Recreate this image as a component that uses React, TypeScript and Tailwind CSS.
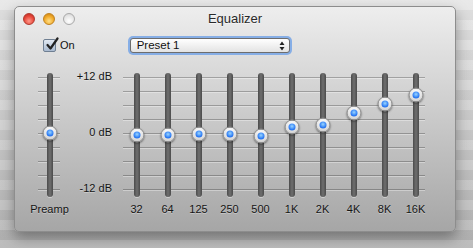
const bands = [
  { label: '32', y: 62 },
  { label: '64', y: 62 },
  { label: '125', y: 61 },
  { label: '250', y: 61 },
  { label: '500', y: 63 },
  { label: '1K', y: 54 },
  { label: '2K', y: 52 },
  { label: '4K', y: 40 },
  { label: '8K', y: 31 },
  { label: '16K', y: 22 },
]

const ticks = [0, 1, 2, 3, 4, 5, 6, 7, 8]

function Ticks({ className }: { className: string }) {
  return (
    <div className={`absolute top-[4px] flex flex-col gap-[13px] ${className}`}>
      {ticks.map((t) => (
        <div key={t} className="h-px bg-black/25 shadow-[0_1px_0_rgba(255,255,255,0.35)]" />
      ))}
    </div>
  )
}

function Slider({ y, label }: { y: number; label: string }) {
  return (
    <div className="w-[31px] flex flex-col items-center">
      <div className="relative w-full h-[124px] flex justify-center">
        <div className="w-[6px] h-full rounded-full bg-[linear-gradient(to_right,#4b4b4b,#6f6f6f_50%,#4b4b4b)] shadow-[0_1px_0_rgba(255,255,255,0.4)]" />
        <div
          className="absolute left-1/2 -translate-x-1/2 -translate-y-1/2 w-[15px] h-[15px] rounded-full border border-[#8a8a8a] bg-[radial-gradient(circle_at_50%_30%,#ffffff,#e4e4e4_55%,#b9b9b9)] shadow-[0_1px_2px_rgba(0,0,0,0.45)] flex items-center justify-center"
          style={{ top: y }}
        >
          <div className="w-[7px] h-[7px] rounded-full bg-[radial-gradient(circle_at_50%_40%,#9ad6ff,#2d7cf5_60%,#1b55c4)]" />
        </div>
      </div>
      <div className="mt-[6px] text-[11px] leading-[13px] text-[#151515] [text-shadow:0_1px_0_rgba(255,255,255,0.35)]">
        {label}
      </div>
    </div>
  )
}

export default function App() {
  return (
    <main
      className="w-[473px] h-[248px] overflow-hidden pl-[14px] pt-[6px] bg-[repeating-linear-gradient(to_bottom,rgba(255,255,255,0.12)_0px,rgba(255,255,255,0.12)_10px,rgba(0,0,0,0.03)_10px,rgba(0,0,0,0.03)_20px),linear-gradient(to_bottom,#e6e6e6,#b3b3b3)]"
      style={{ fontFamily: '"Liberation Sans", Arial, sans-serif' }}
    >
      <div className="w-[442px] h-[226px] rounded-[5px] border border-[#8d8d8d] bg-gradient-to-b from-[#eeeeee] to-[#a6a6a6] shadow-[0_6px_14px_rgba(0,0,0,0.35)] flex flex-col">
        <div className="h-[24px] grid grid-cols-[1fr_auto_1fr] items-center">
          <div className="flex items-center gap-[8px] pl-[8px]">
            <span className="w-[12px] h-[12px] rounded-full border border-[#b0392f] bg-[radial-gradient(circle_at_50%_70%,#ff9a8c,#e8483b_55%,#b52a20)]" />
            <span className="w-[12px] h-[12px] rounded-full border border-[#c0821f] bg-[radial-gradient(circle_at_50%_70%,#ffe08a,#f0a929_55%,#c57d12)]" />
            <span className="w-[12px] h-[12px] rounded-full border border-[#a9a9a9] bg-[radial-gradient(circle_at_50%_70%,#ffffff,#e6e6e6_60%,#cfcfcf)]" />
          </div>
          <div className="text-[13px] text-[#2a2a2a] [text-shadow:0_1px_0_rgba(255,255,255,0.6)]">Equalizer</div>
          <div />
        </div>

        <div className="mt-[5px] h-[19px] flex items-center">
          <label className="ml-[28px] flex items-center gap-[4px] text-[11px] text-[#111]">
            <span className="relative w-[13px] h-[13px] rounded-[2px] border border-[#6f7f92] bg-gradient-to-b from-[#e2e9f2] to-[#a9bad0]">
              <svg className="absolute -top-[3px] left-[1px]" width="14" height="14" viewBox="0 0 14 14">
                <path d="M2.5 8 L5.5 11.5 L12.5 1.5" fill="none" stroke="#222" strokeWidth="2.2" strokeLinecap="round" strokeLinejoin="round" />
              </svg>
            </span>
            On
          </label>
          <div className="ml-[53px] w-[164px] h-[19px] rounded-[5px] bg-[#86aee6] p-[2px]">
            <div className="w-full h-full rounded-[3px] border border-[#6d6d6d] bg-gradient-to-b from-[#ffffff] to-[#e3e3e3] flex items-center pl-[6px] pr-[4px]">
              <span className="grow text-[11.5px] text-[#111]">Preset 1</span>
              <svg width="6" height="10" viewBox="0 0 6 10">
                <path d="M3 0.5 L5.5 4 L0.5 4 Z M3 9.5 L5.5 6 L0.5 6 Z" fill="#222" />
              </svg>
            </div>
          </div>
        </div>

        <div className="mt-[18px] flex items-start pl-[19px]">
          <div className="relative">
            <Ticks className="left-[4px] w-[22px]" />
            <Slider y={60} label="Preamp" />
          </div>
          <div className="w-[47px] h-[125px] -mt-[3px] flex flex-col justify-between items-end text-[11px] leading-[13px] text-[#151515] [text-shadow:0_1px_0_rgba(255,255,255,0.35)]">
            <span>+12 dB</span>
            <span>0 dB</span>
            <span>-12 dB</span>
          </div>
          <div className="relative ml-[9px] flex">
            <Ticks className="left-[2px] right-[6px]" />
            {bands.map((b) => (
              <Slider key={b.label} y={b.y} label={b.label} />
            ))}
          </div>
        </div>
      </div>
    </main>
  )
}
